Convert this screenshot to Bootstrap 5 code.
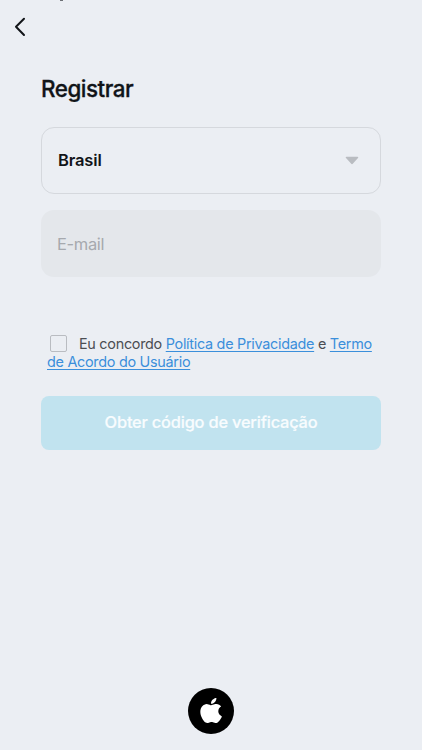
<!DOCTYPE html>
<html lang="pt-BR">
<head>
<meta charset="utf-8">
<meta name="viewport" content="width=device-width, initial-scale=1">
<title>Registrar</title>
<link href="https://cdn.jsdelivr.net/npm/bootstrap@5.3.0/dist/css/bootstrap.min.css" rel="stylesheet">
<style>
body { background: #ebeef3; font-family: Inter, "Liberation Sans", sans-serif; color: #111418; }
.screen { height: 750px; overflow: hidden; }
.topbar { height: 74px; padding: 16px 0 0 12px; }
.status-rest { left: 60px; top: 0; width: 3px; height: 1px; background: #6d7075; }
.form-area { padding: 0 41px; }
.title { font-size: 22.4px; line-height: 30px; font-weight: 500; letter-spacing: -.47px; -webkit-text-stroke: .3px currentColor; margin-bottom: 23px; }
.field { height: 67px; padding: 0 16px; border-radius: 13px; font-size: 16.5px; }
.country { border: 1px solid #d5d8dd; background: transparent; color: #111418; font-weight: 600; letter-spacing: -.15px; margin-bottom: 16px; padding: 0 21px 0 16px; }
.email, .email:focus { border: 0; background: #e4e7eb; letter-spacing: -.35px; }
.email::placeholder { color: #a6a9ae; }
.terms { margin: 58px 0 0 6px; font-size: 14.4px; line-height: 18px; letter-spacing: -.28px; color: #4b4e53; white-space: nowrap; }
.terms a { color: #3b8fdb; text-underline-offset: 2px; }
.terms .form-check-input { width: 17px; height: 17px; margin: 0 12px 0 3px; border: 1.5px solid #b9bcc1; border-radius: 2px; background: transparent; vertical-align: -3px; }
.submit, .submit:disabled { height: 54px; margin-top: 24.5px; padding: 0; border: 0; border-radius: 8px; background: #c1e3ef; color: #f8fcfe; font-size: 16.4px; font-weight: 500; letter-spacing: -.2px; -webkit-text-stroke: .2px currentColor; opacity: 1; }
.apple { width: 46px; height: 46px; margin-bottom: 16.5px; background: #000; }
.apple svg { margin-top: -1px; }
</style>
</head>
<body>
<div class="screen d-flex flex-column position-relative">
  <span class="status-rest position-absolute"></span>
  <header class="topbar">
    <button class="btn p-0 border-0 d-block lh-1" type="button" aria-label="Voltar">
      <svg class="d-block" width="16" height="22" viewBox="0 0 16 22" fill="none" stroke="#111418" stroke-width="2" stroke-linecap="round" stroke-linejoin="round"><path d="M12 2.8 4 10.800l8 8.200"/></svg>
    </button>
  </header>
  <main class="form-area">
    <h1 class="title">Registrar</h1>
    <button class="field country d-flex align-items-center justify-content-between w-100" type="button">
      <span>Brasil</span>
      <svg width="14" height="9" viewBox="0 0 14 9" fill="#b9bcc1"><path d="M1.500.7h11c.8 0 1 .8.500 1.300L8 7.600c-.6.7-1.400.7-2 0L1 2C.5 1.500.7.7 1.500.7z"/></svg>
    </button>
    <input class="field email form-control" type="email" placeholder="E-mail" aria-label="E-mail">
    <div class="terms">
      <input class="form-check-input" type="checkbox" aria-label="Eu concordo"><span>Eu concordo</span> <a href="#">Política de Privacidade</a> e <a href="#">Termo<br>de Acordo do Usuário</a>
    </div>
    <button class="submit btn w-100" type="button" disabled>Obter código de verificação</button>
  </main>
  <footer class="mt-auto d-flex justify-content-center">
    <button class="apple btn rounded-circle p-0 border-0 d-flex align-items-center justify-content-center" type="button" aria-label="Apple">
      <svg width="22" height="25" viewBox="1.300 0 13.300 16" preserveAspectRatio="none" fill="#fff"><path d="M11.182.008C11.148-.03 9.923.023 8.857 1.180c-1.066 1.156-.902 2.482-.878 2.516s1.520.087 2.475-1.258.762-2.391.728-2.430m3.314 11.733c-.048-.096-2.325-1.234-2.113-3.422s1.675-2.789 1.698-2.854-.597-.790-1.254-1.157a3.700 3.700 0 0 0-1.563-.434c-.108-.003-.483-.095-1.254.116-.508.139-1.653.589-1.968.607-.316.018-1.256-.522-2.267-.665-.647-.125-1.333.131-1.824.328-.490.196-1.422.754-2.074 2.237-.652 1.482-.311 3.830-.067 4.560s.625 1.924 1.273 2.796c.576.984 1.340 1.667 1.659 1.899s1.219.386 1.843.067c.502-.308 1.408-.485 1.766-.472.357.013 1.061.154 1.782.539.571.197 1.111.115 1.652-.105.541-.221 1.324-1.059 2.238-2.758q.520-1.185.473-1.282"/></svg>
    </button>
  </footer>
</div>
<script src="https://cdn.jsdelivr.net/npm/bootstrap@5.3.0/dist/js/bootstrap.bundle.min.js"></script>
</body>
</html>
